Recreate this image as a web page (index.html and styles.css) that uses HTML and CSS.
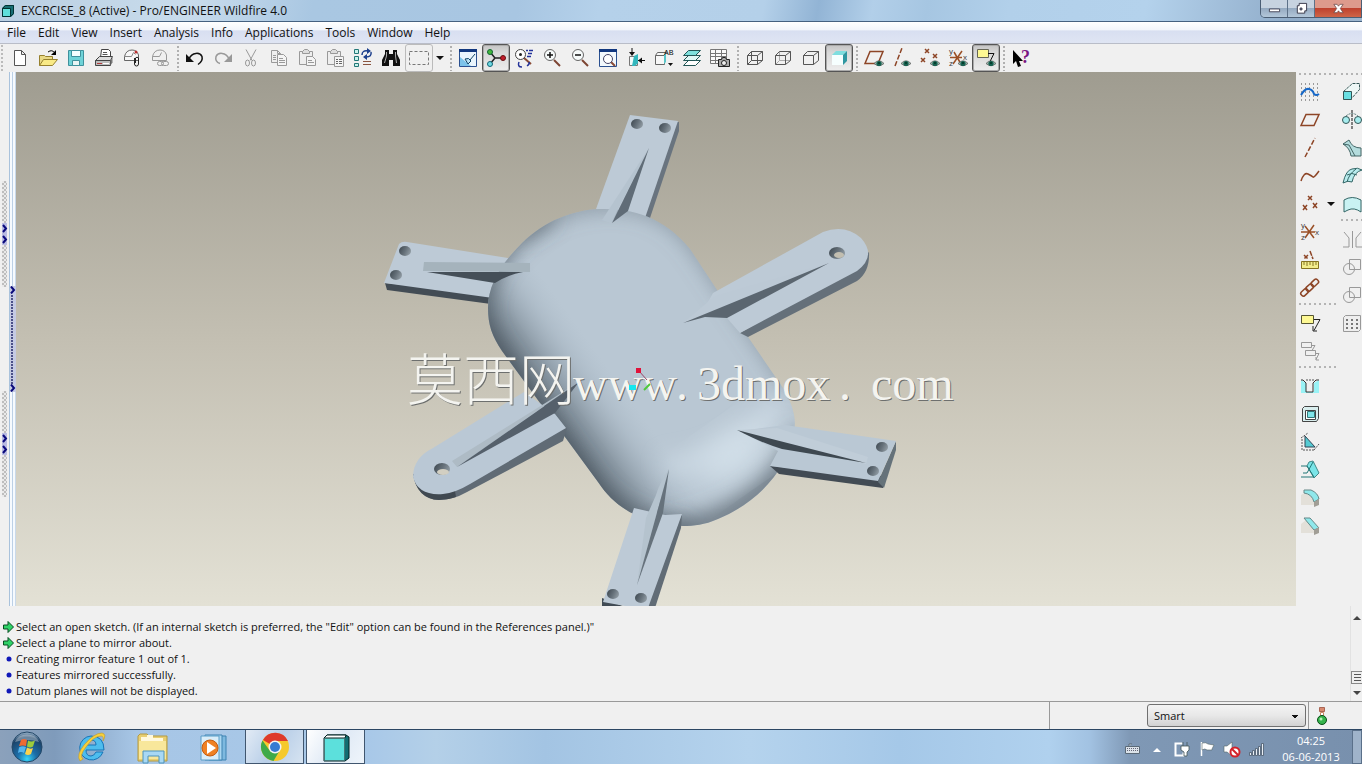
FILE: index.html
```html
<!DOCTYPE html>
<html lang="en">
<head>
<meta charset="utf-8">
<title>EXCRCISE_8 (Active) - Pro/ENGINEER Wildfire 4.0</title>
<link rel="stylesheet" href="styles.css">
</head>
<body>
<svg class="defs" aria-hidden="true">
  <symbol id="eye" viewBox="0 0 10 7"><path d="M0 3.500Q5-2 10 3.500Q5 8 0 3.500z" fill="#9db8ae" stroke="#555" stroke-width=".7"/><circle cx="5" cy="3.500" r="2.600" fill="#15604f"/><circle cx="5" cy="3" r="1" fill="#032"/></symbol>
  <symbol id="lens" viewBox="0 0 20 20"><path d="M12 12l6 6" stroke="#7d4432" stroke-width="2"/><circle cx="8" cy="7" r="5.500" fill="#f6fafa" stroke="#666"/></symbol>
  <symbol id="sheet" viewBox="0 0 20 20"><path d="M2.500 2.500h6l3 3v9h-9zM8.500 2.500v3h3" fill="#eee"/><path d="M8.500 6.500h6l3 3v8h-9z" fill="#f4f4f4"/><path d="M10 10.500h4M10 12.500h6M10 14.500h6M4 7.500h3M4 9.500h3M4 11.500h3"/></symbol>
  <symbol id="clip" viewBox="0 0 20 20"><path d="M2.500 3.500h13v13h-13z" fill="#eee"/><path d="M5.500 5.500v-2l2-2h3l2 2v2z" fill="#ddd"/></symbol>
</svg>

<header class="titlebar">
  <svg class="app-icon" viewBox="0 0 14 14"><path d="M1 4l3-3h9v9l-3 3H1z" fill="#156d73"/><path d="M1.500 4.500h8v8h-8z" fill="#5fe0dc" stroke="#033"/><path d="M1.500 4.500l3-3h8v8l-3 3" fill="none" stroke="#033"/></svg>
  <h1>EXCRCISE_8 (Active) - Pro/ENGINEER Wildfire 4.0</h1>
  <div class="window-controls">
    <button aria-label="Minimize"><svg viewBox="0 0 14 14"><path d="M1.500 7.500h11v3h-11z" fill="#fff" stroke="#445"/></svg></button>
    <button aria-label="Restore"><svg viewBox="0 0 14 14"><path d="M4.500 1.500h8v8h-2v2.500h-8v-8h2z" fill="#fff" stroke="#334"/><path d="M5.500 6.500h2v2h-2z" fill="#9ab" stroke="#334"/></svg></button>
    <button class="close" aria-label="Close"><svg viewBox="0 0 14 14"><path d="M2 2.500h3.500L7 4.500l1.500-2H12L9 7l3 4.500H8.500L7 9.500l-1.500 2H2L5 7z" fill="#fff" stroke="#644" stroke-width=".8"/></svg></button>
  </div>
</header>

<nav class="menubar">
  <button>File</button><button>Edit</button><button>View</button><button>Insert</button><button>Analysis</button><button>Info</button><button>Applications</button><button>Tools</button><button>Window</button><button>Help</button>
</nav>

<div class="toolbar" role="toolbar">
  <div class="group">
    <button aria-label="New"><svg viewBox="0 0 20 20"><path d="M4.500 2.500h7l4 4v11h-11zM11.500 2.500v4h4" fill="#fff" stroke="#555"/></svg></button>
    <button aria-label="Open"><svg viewBox="0 0 20 20"><path d="M1.500 17.500v-10h5l1 1h7v3" fill="#e9d984" stroke="#97812e"/><path d="M1.500 17.500l4-6h14l-5 6z" fill="#f9ea86" stroke="#97812e"/><path d="M10 4q4-3 7 1" fill="none" stroke="#000"/><path d="M18 2v5h-5z" fill="#000"/></svg></button>
    <button aria-label="Save"><svg viewBox="0 0 20 20"><path d="M2.500 2.500h15v15h-15z" fill="#6fd3d8" stroke="#3f919c"/><path d="M5.500 2.500h9v6h-9z" fill="#f4ffff" stroke="#3f919c"/><path d="M6.500 12.500h7v5h-7z" fill="#e8f4f4" stroke="#3f919c"/></svg></button>
    <button aria-label="Print"><svg viewBox="0 0 20 20"><path d="M6.500 9.500l1-8h7l2 2v6z" fill="#fff" stroke="#444"/><path d="M9 4.500h4M8.500 6.500h5" stroke="#555"/><path d="M1.500 12.500l4-4h13l-2 4z" fill="#ddd" stroke="#444"/><path d="M1.500 12.500h15v5h-15z" fill="#bdbdbd" stroke="#444"/><path d="M16.500 12.500l2-3v5l-2 3z" fill="#777"/><path d="M3 15.500h5" stroke="#b13a3a"/><path d="M9 15.500h6" stroke="#fff"/></svg></button>
    <button aria-label="Send by mail"><svg viewBox="0 0 20 20"><path d="M2.500 12.500v-4Q4 2 10 2q5 0 6.500 5v5.500z" fill="#f7f7f7" stroke="#666"/><path d="M2.500 8.500h7l2-4 2 2" fill="none" stroke="#888"/><path d="M12.500 10v6a2 2 0 0 0 4 0v-6a2 2 0 0 0-3 0v5" fill="none" stroke="#222"/><circle cx="14" cy="4" r="1.500" fill="#b33"/></svg></button>
    <button class="dim" aria-label="Send link"><svg viewBox="0 0 20 20"><path d="M2.500 12.500v-4Q4 2 10 2q5 0 6.500 5v5.500zM2.500 8.500h7l2-4"/><rect x="7.500" y="13.500" width="6" height="4" rx="2" fill="#eee"/><rect x="11.500" y="13.500" width="7" height="4" rx="2"/></svg></button>
  </div>
  <i class="grip"></i>
  <div class="group">
    <button aria-label="Undo"><svg viewBox="0 0 20 20"><path d="M4 11C7 4 15 4 17 8.500c1 4-1 6-4 8" fill="none" stroke="#111" stroke-width="1.500"/><path d="M1 6v8h8z" fill="#111"/></svg></button>
    <button aria-label="Redo"><svg viewBox="0 0 20 20"><path d="M16 11C13 4 5 4 3 8.500c-1 4 1 6 4 7" fill="none" stroke="#999" stroke-width="1.500"/><path d="M19 6v8h-8z" fill="#999"/></svg></button>
    <button class="dim" aria-label="Cut"><svg viewBox="0 0 20 20"><path d="M5 1.500l6 11M15 1.500l-6 11"/><ellipse cx="6.500" cy="15" rx="2" ry="3"/><ellipse cx="12.500" cy="15" rx="2" ry="3"/></svg></button>
    <button class="dim" aria-label="Copy"><svg viewBox="0 0 20 20"><use href="#sheet"/></svg></button>
    <button class="dim" aria-label="Paste"><svg viewBox="0 0 20 20"><use href="#clip"/><path d="M9.500 8.500h6l3 3v6h-9z" fill="#f4f4f4"/><path d="M11 12.500h4M11 14.500h6"/></svg></button>
    <button class="dim" aria-label="Paste special"><svg viewBox="0 0 20 20"><use href="#clip"/><path d="M9.500 8.500h9v10h-9z" fill="#f4f4f4"/><path d="M11 11.500h2M14 11.500h3M11 13.500h2M14 13.500h3M11 15.500h2M14 15.500h3" stroke="#666"/></svg></button>
    <button aria-label="Regenerate"><svg viewBox="0 0 20 20"><path d="M1.500 1.500h4v4h-4zM1.500 8.500h4v4h-4zM1.500 15.500h4v3h-4z" fill="#c9f2ec" stroke="#277"/><path d="M9 7q0-5 6-4M18 4q1 5-5 5" fill="none" stroke="#1c3f8c" stroke-width="1.500"/><path d="M14 0l4 3-4 3zM14 6l-4 3 4 3z" fill="#1c3f8c"/><path d="M10 13.500h8M10 16.500h8" stroke="#8a5540"/></svg></button>
    <button aria-label="Find"><svg viewBox="0 0 20 20"><path d="M4 2h4v4h4V2h4v4l3 6v6h-7v-6H8v6H1v-6l3-6z" fill="#111"/><path d="M5.500 4v4l-2 7M14.500 4v4l1 7" fill="none" stroke="#aaa"/></svg></button>
    <button class="framed" aria-label="Select box"><svg viewBox="0 0 20 20"><path d="M.500 3.500h19v13H.500z" fill="none" stroke="#777" stroke-dasharray="3 2"/></svg></button>
    <button class="drop" aria-label="Selection options"></button>
  </div>
  <i class="grip"></i>
  <div class="group">
    <button aria-label="Repaint"><svg viewBox="0 0 20 20"><path d="M1.500 1.500h17v17h-17z" fill="#eaf5fd" stroke="#2a5090"/><path d="M1 1h18v3H1z" fill="#12387f"/><path d="M2 9l11 9H2z" fill="#7cc3ea"/><path d="M17 6l-5 6M7 11q4-2 6 2l-3 3z" stroke="#146" fill="#b8e0f3"/></svg></button>
    <button class="pressed" aria-label="Spin centre"><svg viewBox="0 0 20 20"><path d="M4 4l5 6-5 6M9 10h8" fill="none" stroke="#222" stroke-width="1.500"/><circle cx="4" cy="4" r="2.500" fill="#44b83c" stroke="#163"/><circle cx="4" cy="16" r="2.500" fill="#6fd9e2" stroke="#167"/><circle cx="17" cy="10" r="2.500" fill="#c21c2c" stroke="#611"/></svg></button>
    <button aria-label="Orient mode"><svg viewBox="0 0 20 20"><path d="M10 10l7 6" stroke="#8a4a35" stroke-width="2"/><circle cx="6.500" cy="6.500" r="5" fill="#fff" stroke="#444"/><circle cx="6.500" cy="6.500" r="1.500" fill="#222"/><path d="M12 2.500h2M15 2.500h4M14 5.500h4M13 8.500h4M5 14q-2 5 3 5M13 18q3-2 2-4" stroke="#23329a" fill="none" stroke-width="1.500"/></svg></button>
    <button aria-label="Zoom in"><svg viewBox="0 0 20 20"><use href="#lens"/><path d="M5 7h6M8 4v6" stroke="#111" stroke-width="1.500"/></svg></button>
    <button aria-label="Zoom out"><svg viewBox="0 0 20 20"><use href="#lens"/><path d="M5 7h6" stroke="#111" stroke-width="1.500"/></svg></button>
    <button aria-label="Refit"><svg viewBox="0 0 20 20"><path d="M1.500 1.500h17v17h-17z" fill="#f3f9fd" stroke="#2a5090"/><path d="M1 1h18v3H1z" fill="#12387f"/><path d="M13 14l4 4" stroke="#8a4a35" stroke-width="2"/><circle cx="10" cy="11" r="4.500" fill="#fff" stroke="#446"/></svg></button>
    <button aria-label="Reorient view"><svg viewBox="0 0 20 20"><path d="M3.500 8.500h8v9h-8z" fill="#f1fbfb" stroke="#777"/><path d="M8 8l4-2v9l-3 3H6z" fill="#32b7bd"/><path d="M6 0v6M12 12.500h7" stroke="#111"/><path d="M3 4h6L6 8zM12 12.500l4-3v6z" fill="#111"/></svg></button>
    <button aria-label="Saved views"><svg viewBox="0 0 20 20"><path d="M1.500 7.500h9v9h-9zM1.500 7.500l2-3h9l-2 3" fill="#f7f7f7" stroke="#666"/><path d="M10 7l2-2v9l-2 2z" fill="#58c5c8"/><text class="mono-label" x="10" y="7">AB</text><path d="M14 15h5l-2.500 3z" fill="#111"/></svg></button>
    <button aria-label="Layers"><svg viewBox="0 0 20 20"><path d="M1.500 17.500l5-5h12l-5 5z" fill="#fff" stroke="#255"/><path d="M1.500 12.500l5-5h12l-5 5z" fill="#e0f7f5" stroke="#255"/><path d="M1.500 7.500l5-5h12l-5 5z" fill="#7ee0dc" stroke="#255"/></svg></button>
    <button aria-label="View manager"><svg viewBox="0 0 20 20"><path d="M.500 1.500h16v14H.500zM.500 5.500h16M.500 8.500h16M.500 12.500h16M5.500 1.500v14M11.500 1.500v14" fill="#fafafa" stroke="#777"/><path d="M8.500 11.500h3l1-2h3l1 2h3v7h-11z" fill="#aaa" stroke="#222"/><circle cx="14" cy="15" r="2.500" fill="#eee" stroke="#222"/></svg></button>
  </div>
  <i class="grip"></i>
  <div class="group">
    <button aria-label="Wireframe"><svg class="thin" viewBox="0 0 20 20"><path d="M2.500 7.500h10v9h-10zM6.500 3.500h11v9h-11zM2.500 7.500l4-4M12.500 7.500l5-4M12.500 16.500l5-4M2.500 16.500l4-4"/></svg></button>
    <button aria-label="Hidden line"><svg class="thin" viewBox="0 0 20 20"><path d="M6.500 3.500v9h11M2.500 16.500l4-4" stroke="#aaa"/><path d="M2.500 7.500h10v9h-10zM2.500 7.500l4-4h11v9l-5 4M12.500 7.500l5-4"/></svg></button>
    <button aria-label="No hidden"><svg class="thin" viewBox="0 0 20 20"><path d="M2.500 7.500h10v9h-10zM2.500 7.500l4-4h11v9l-5 4M12.500 7.500l5-4"/></svg></button>
    <button class="pressed" aria-label="Shading"><svg viewBox="0 0 20 20"><path d="M3 7l4-4h11l-4 4z" fill="#7fdedf"/><path d="M3 7h11v10H3z" fill="#f6ffff"/><path d="M14 7l4-4v10l-4 4z" fill="#2f97a1"/></svg></button>
  </div>
  <i class="grip"></i>
  <div class="group">
    <button aria-label="Datum planes"><svg viewBox="0 0 20 20"><path d="M1 15.500L6 3.500h13L14 15.500z" fill="none" stroke="#8d4526" stroke-width="1.500"/><use href="#eye" x="10" y="12" width="10" height="7"/></svg></button>
    <button aria-label="Datum axes"><svg viewBox="0 0 20 20"><path d="M3 18L10 0" fill="none" stroke="#8d4526" stroke-width="1.500" stroke-dasharray="5 2"/><use href="#eye" x="9" y="12" width="10" height="7"/></svg></button>
    <button aria-label="Datum points"><svg viewBox="0 0 20 20"><path d="M5 1l4 4M9 1L5 5M13 6l4 4M17 6l-4 4M1 10l4 4M5 10l-4 4" stroke="#8d4526" stroke-width="1.500"/><use href="#eye" x="10" y="12" width="10" height="7"/></svg></button>
    <button aria-label="Coordinate systems"><svg viewBox="0 0 20 20"><path d="M2 9.500h12M5 16L14 3M6 4l7 12" stroke="#9a5027" stroke-width="1.500"/><text class="axis-label" x="1" y="6">y</text><text class="axis-label" x="1" y="18">z</text><text class="axis-label" x="15" y="12">x</text><use href="#eye" x="10" y="12" width="10" height="7"/></svg></button>
    <button class="pressed" aria-label="Annotations"><svg viewBox="0 0 20 20"><path d="M1.500 1.500h11v8h-11z" fill="#fdf893" stroke="#665"/><path d="M12 5.500h6l-4 8" fill="none" stroke="#111"/><use href="#eye" x="10" y="12" width="10" height="7"/></svg></button>
  </div>
  <i class="grip"></i>
  <div class="group">
    <button aria-label="Context help"><svg viewBox="0 0 20 20"><path d="M2 2v14l3-3 2 6 3-1-2-5h4z" fill="#000"/><text class="help-label" x="10" y="15">?</text></svg></button>
  </div>
</div>

<main class="work">
  <aside class="sash">
    <div class="sash-outer">
      <div class="handle"><svg viewBox="0 0 6 20"><path d="M1 1l3 3.500-3 3.500M1 12l3 3.500-3 3.500"/></svg></div>
      <div class="handle"><svg viewBox="0 0 6 20"><path d="M1 1l3 3.500-3 3.500M1 12l3 3.500-3 3.500"/></svg></div>
    </div>
    <div class="sash-inner">
      <div class="splitter"><svg viewBox="0 0 6 8"><path d="M1 .500L4 4 1 7.500"/></svg><svg viewBox="0 0 6 8"><path d="M1 .500L4 4 1 7.500"/></svg></div>
    </div>
  </aside>

  <svg class="viewport" viewBox="16 72 1280 534" preserveAspectRatio="xMidYMid slice">
    <defs>
      <path id="body" d="M600 209C640 208 668 222 690 249L748 337L783 388C792 403 797 418 794 432C788 470 757 503 718 519C704 525 694 526 683 526C646 524 617 511 598 482L502 351C492 336 488 325 488 308C488 284 502 263 522 243C545 221 572 210 600 209z"/>
      <clipPath id="bodyClip"><use href="#body"/></clipPath>
      <filter id="soft" x="-40%" y="-40%" width="180%" height="180%"><feGaussianBlur stdDeviation="11"/></filter>
      <filter id="wide" x="-60%" y="-60%" width="220%" height="220%"><feGaussianBlur stdDeviation="17"/></filter>
      <linearGradient id="flank" gradientUnits="userSpaceOnUse" x1="550" y1="416" x2="611" y2="372"><stop offset="0" stop-color="#4c5862" stop-opacity=".8"/><stop offset=".35" stop-color="#62707b" stop-opacity=".5"/><stop offset=".7" stop-color="#8493a0" stop-opacity=".2"/><stop offset="1" stop-color="#a0b0bd" stop-opacity="0"/></linearGradient>
      <linearGradient id="hole" x2="1" y2=".4"><stop offset="0" stop-color="#3c464e"/><stop offset=".6" stop-color="#66717a"/><stop offset="1" stop-color="#8a959d"/></linearGradient>
    </defs>
    <!-- top and left arms, behind the shell -->
    <g fill="#69747f">
      <path d="M675 122l4 0v9L650 218h-8z"/>
      <path d="M385 283l2 7 104 14 4-10z" fill="#434c55"/>
    </g>
    <g fill="#bdcad6">
      <path d="M630 115l48 6-33 97-49-9z"/>
      <path d="M399 244q3-3 8-2l101 16 10 18-23 7-2 15-109-15z"/>
    </g>
    <!-- shell -->
    <use href="#body" fill="#b9c7d3"/>
    <use href="#body" fill="url(#flank)"/>
    <g clip-path="url(#bodyClip)" fill="none">
      <path d="M550 212Q475 255 480 318Q484 335 494 350L592 490Q620 525 690 534" stroke="#4b5660" stroke-width="14" filter="url(#soft)"/>
      <path d="M520 232Q560 201 610 201Q668 200 700 247L795 386" stroke="#66737e" stroke-width="10" filter="url(#soft)"/>
      <path d="M660 536Q760 522 806 435" stroke="#5d6973" stroke-width="20" filter="url(#soft)"/>
      <ellipse cx="734" cy="454" rx="42" ry="18" transform="rotate(-35 734 454)" fill="#d8e5ee" filter="url(#wide)"/>
      <path d="M665 466Q740 462 780 400" stroke="#d2dfe9" stroke-width="12" filter="url(#soft)"/>
    </g>
    <!-- outer arms in front of the shell -->
    <g>
      <path d="M740 333l8 4 109-56q13-9 12-29l-14 14z" fill="#65707a"/>
      <path d="M713 293L823 232Q845 224 861 238Q877 256 857 271L740 333L727 318L700 316z" fill="#bdcad6"/>
      <path d="M413 474q4 25 26 26 14 0 28-8l96-51 4-13-110 40z" fill="#606b75"/>
      <path d="M413 474q4 25 26 26 9 0 17-3l-2-12z" fill="#404951"/>
      <path d="M524 392l-91 56q-20 10-20 29 5 19 30 17 12-1 27-10l96-56-11-14z" fill="#bac8d5"/>
      <path d="M770 466l9 8 104 14 1-12z" fill="#424b54"/>
      <path d="M896 441v9l-12 38-6-6z" fill="#65727a"/>
      <path d="M785 425l111 16-18 40-108-15 8-15-38-20z" fill="#bac8d4"/>
      <path d="M682 514l-1 14-26 80h-12z" fill="#616c76"/>
      <path d="M602 598v10h26z" fill="#414b54"/>
      <path d="M634 508l13 3 18 4 17-1-34 94-23-2-22-4z" fill="#bdcad6"/>
    </g>
    <!-- ribs -->
    <g>
      <path d="M649 148l-47 72 9 3z" fill="#b5c3cf"/><path d="M649 148l-37 75 16-12z" fill="#606c77"/>
      <path d="M427 272h96q-16 3-28 11z" fill="#454f58"/><path d="M424 262l106 1v9l-107-1z" fill="#a5b3bc"/>
      <path d="M829 263l-114 33-32 27z" fill="#bcc9d5"/><path d="M829 263L683 323l22-6 22 1z" fill="#5b6670"/>
      <path d="M457 467l120-84-14 9-111 69z" fill="#aebbc5"/><path d="M457 467L579 382l-24 31z" fill="#55606b"/>
      <path d="M737 430l40-2 91 29-2 7z" fill="#c0cdd8"/><path d="M737 430l129 33-84-14q-18-5-45-19z" fill="#3e4850"/>
      <path d="M669 469q-10 15-13 26l-10 23-9 67z" fill="#b5c3ce"/><path d="M669 469l-6 44-26 72z" fill="#66727c"/>
    </g>
    <!-- bolt holes -->
    <g fill="url(#hole)">
      <ellipse cx="637" cy="124" rx="6" ry="5"/><ellipse cx="665" cy="128" rx="6" ry="5"/>
      <ellipse cx="405" cy="251" rx="6" ry="5"/><ellipse cx="396" cy="275" rx="6" ry="5"/>
      <ellipse cx="882" cy="447" rx="6" ry="5"/><ellipse cx="873" cy="471" rx="6" ry="5"/>
      <ellipse cx="613" cy="594" rx="6" ry="5"/><ellipse cx="641" cy="598" rx="6" ry="5"/>
      <ellipse cx="837" cy="253" rx="8" ry="6"/><ellipse cx="442" cy="469" rx="8" ry="6"/>
    </g>
    <ellipse cx="839" cy="255" rx="5" ry="3" fill="#c2beb0"/>
    <ellipse cx="443" cy="472" rx="6" ry="3" fill="#d2cfc2"/>
    <text class="watermark-shade" y="401" aria-hidden="true"><tspan class="cjk" x="408">莫西网</tspan><tspan x="574">www</tspan><tspan x="677">.</tspan><tspan x="698">3dmox</tspan><tspan x="840">.</tspan><tspan x="872">com</tspan></text>
    <text class="watermark" y="400"><tspan class="cjk" x="407">莫西网</tspan><tspan x="573">www</tspan><tspan x="676">.</tspan><tspan x="697">3dmox</tspan><tspan x="839">.</tspan><tspan x="871">com</tspan></text>
    <!-- spin centre -->
    <path d="M639 371l8 9" stroke="#9a4668"/><path d="M644 390l6-6" stroke="#4fc83c" stroke-width="2"/>
    <path d="M636 368h5v5h-5z" fill="#e0123a"/><path d="M629 385h7v5h-7z" fill="#15e6ef"/>
  </svg>

  <aside class="feature-bars">
    <div class="bar">
      <i class="rule"></i>
      <button aria-label="Sketch"><svg viewBox="0 0 20 20"><path d="M1 2h18M1 6h18M1 10h18M1 14h18M1 18h18" stroke="#444" stroke-dasharray="1 3"/><path d="M1 13Q5 6 9 7t5 5q2 2 5 0" fill="none" stroke="#1769c9" stroke-width="2"/></svg></button>
      <button aria-label="Plane"><svg viewBox="0 0 20 20"><path d="M1 15.500L6 4.500h13l-5 11z" fill="none" stroke="#8d4526" stroke-width="1.500"/></svg></button>
      <button aria-label="Axis"><svg viewBox="0 0 20 20"><path d="M5 19L15 0" stroke="#8d4526" stroke-width="1.500" stroke-dasharray="5 2"/></svg></button>
      <button aria-label="Curve"><svg viewBox="0 0 20 20"><path d="M1 15Q4 6 8 8t5 3 6-6" fill="none" stroke="#8d4526" stroke-width="1.500"/></svg></button>
      <div class="pair"><button aria-label="Point"><svg viewBox="0 0 20 20"><path d="M8 2l4 4M12 2L8 6M13 9l4 5M17 9l-4 5M3 11l4 5M7 11l-4 5" stroke="#8d4526" stroke-width="1.500"/></svg></button><button class="drop" aria-label="Point options"></button></div>
      <button aria-label="Coordinate system"><svg viewBox="0 0 20 20"><path d="M1 10h14M5 16l9-13M5 4l9 12" stroke="#9a5027" stroke-width="1.500"/><text class="axis-label" x="1" y="6">y</text><text class="axis-label" x="1" y="18">z</text><text class="axis-label" x="15" y="13">x</text></svg></button>
      <button aria-label="Analysis feature"><svg viewBox="0 0 20 20"><path d="M4 5l4 4M8 5L4 9M10 1l3 8" stroke="#8d4526" stroke-width="1.500" stroke-dasharray="5 1"/><path d="M1.500 11.500h17v7h-17z" fill="#f2ed8c" stroke="#857422"/><path d="M4 12v3M7 12v4M10 12v3M13 12v4M16 12v3" stroke="#857422"/></svg></button>
      <button aria-label="Reference"><svg viewBox="0 0 20 20"><g transform="rotate(-43 10 10)" fill="none" stroke="#8d4526" stroke-width="1.500"><rect x="-1" y="7" width="8" height="5" rx="2"/><rect x="6" y="7" width="8" height="5" rx="2"/><rect x="13" y="7" width="8" height="5" rx="2"/></g></svg></button>
      <i class="rule"></i>
      <button aria-label="Annotation"><svg viewBox="0 0 20 20"><path d="M1.500 2.500h12v8h-12z" fill="#fdf893" stroke="#553"/><path d="M14 6.500h6l-6 11M13 13v5h4" fill="none" stroke="#222"/></svg></button>
      <button class="dim" aria-label="Propagate annotation"><svg viewBox="0 0 20 20"><path d="M1.500 1.500h10v5h-10zM12 4.500h3l-3 5M5.500 9.500h10v5h-10zM16 12.500h3l-3 6M16 16v3h3"/></svg></button>
      <i class="rule"></i>
      <button aria-label="Hole"><svg viewBox="0 0 20 20"><path d="M1 4l5 3v9h8V7l5-3v13H1z" fill="#99f2f5"/><path d="M1 4h2l3 3v9h7V7l3-3h3" fill="none" stroke="#333"/><path d="M6 4h9" stroke="#555" stroke-dasharray="2 1"/></svg></button>
      <button aria-label="Shell"><svg viewBox="0 0 20 20"><path d="M2.500 4.500l2-2h14v12l-2 3h-14z" fill="#d9eeee" stroke="#444"/><path d="M5.500 6.500h10v9h-10z" fill="#fff" stroke="#444"/><path d="M7.500 7.500h7v6h-7z" fill="#7fe4e8" stroke="#377"/></svg></button>
      <button aria-label="Rib"><svg viewBox="0 0 20 20"><path d="M1 6l7-5M14 18l5-6M2 7v11h12" fill="none" stroke="#555" stroke-dasharray="2 1"/><path d="M5 4v11h10z" fill="#55cbd3" stroke="#345"/></svg></button>
      <button aria-label="Draft"><svg viewBox="0 0 20 20"><path d="M9 2l4-1 6 12-5 5-7-12z" fill="#7ae5e8" stroke="#488"/><path d="M1 17h13M1 6h6M3 13h4l6-11M7 6l7 11" fill="none" stroke="#277"/></svg></button>
      <button aria-label="Round"><svg viewBox="0 0 20 20"><path d="M1 7l6-4q8 3 12 14H1z" fill="#e3e0d9"/><path d="M4 2h7q7 3 8 9l-5 3Q12 6 4 5z" fill="#8fe8eb" stroke="#688"/><path d="M14 14l5-3v6l-5 2z" fill="#a19e96"/></svg></button>
      <button aria-label="Chamfer"><svg viewBox="0 0 20 20"><path d="M1 8l5-4 11 13H1z" fill="#e3e0d9"/><path d="M4 2h6l9 10-5 2z" fill="#8fe8eb" stroke="#688"/><path d="M14 14l5-3v6l-5 2z" fill="#a19e96"/></svg></button>
    </div>
    <div class="bar">
      <i class="rule"></i>
      <button aria-label="Extrude"><svg viewBox="0 0 20 20"><path d="M1.500 9.500l9-8h7v6l-8 9" fill="#eef7f6" stroke="#355" stroke-dasharray="3 1"/><path d="M1.500 9.500h8v8h-8z" fill="#69dfe2" stroke="#355"/></svg></button>
      <button aria-label="Revolve"><svg viewBox="0 0 20 20"><circle cx="4" cy="10" r="3.500" fill="#a6ecee" stroke="#355"/><circle cx="16" cy="10" r="3.500" fill="#a6ecee" stroke="#355"/><path d="M4 6q6-5 12 0" fill="none" stroke="#577" stroke-dasharray="2 1"/><path d="M10 0v20" stroke="#111" stroke-dasharray="3 1"/></svg></button>
      <button aria-label="Sweep"><svg viewBox="0 0 20 20"><path d="M1 6l6-4q3 8 12 8v8H9Q8 10 1 6z" fill="#b4dcdd" stroke="#466"/><path d="M1 6l6 1 6 11" fill="none" stroke="#466"/></svg></button>
      <button aria-label="Boundary blend"><svg viewBox="0 0 20 20"><path d="M1 17Q4 4 10 3q6-2 10 1-8 2-10 12-4-2-9 1z" fill="#b9ecee" stroke="#366"/><path d="M5 9q5-3 10 0M14 3Q7 8 5 16" fill="none" stroke="#366"/></svg></button>
      <button aria-label="Style"><svg viewBox="0 0 20 20"><path d="M2 6q8-5 17 0v12q-7-5-13-2l-4 2z" fill="#c9f2f3" stroke="#366"/></svg></button>
      <i class="rule"></i>
      <button class="dim" aria-label="Mirror"><svg viewBox="0 0 20 20"><path d="M10.500 2v17M1 18h6V9L2 3M20 18h-6V9l5-6"/></svg></button>
      <button class="dim" aria-label="Merge"><svg viewBox="0 0 20 20"><path d="M7.500 2.500h11v10h-11z"/><circle cx="7" cy="12" r="5.500"/></svg></button>
      <button class="dim" aria-label="Trim"><svg viewBox="0 0 20 20"><path d="M7.500 2.500h11v10h-11z"/><circle cx="7" cy="12" r="5.500"/></svg></button>
      <button class="dim" aria-label="Pattern"><svg viewBox="0 0 20 20"><path d="M1.500 4.500l2-2h15v14l-2 2h-15z" fill="#eee"/><path d="M4 7h12M4 11h12M4 15h12" stroke="#777" stroke-width="2" stroke-dasharray="2 3"/></svg></button>
    </div>
  </aside>
</main>

<section class="messages">
  <ul>
    <li><svg viewBox="0 0 11 12"><path d="M.500 4v4H5v3.500L10.500 6 5 .500V4z" fill="#2fd267" stroke="#064d20"/></svg>Select an open sketch. (If an internal sketch is preferred, the "Edit" option can be found in the References panel.)"</li>
    <li><svg viewBox="0 0 11 12"><path d="M.500 4v4H5v3.500L10.500 6 5 .500V4z" fill="#2fd267" stroke="#064d20"/></svg>Select a plane to mirror about.</li>
    <li><svg viewBox="0 0 11 12"><circle cx="6" cy="6" r="2.500" fill="#1018b8"/></svg>Creating mirror feature 1 out of 1.</li>
    <li><svg viewBox="0 0 11 12"><circle cx="6" cy="6" r="2.500" fill="#1018b8"/></svg>Features mirrored successfully.</li>
    <li><svg viewBox="0 0 11 12"><circle cx="6" cy="6" r="2.500" fill="#1018b8"/></svg>Datum planes will not be displayed.</li>
  </ul>
  <div class="scroller"><i class="up"></i><i class="thumb"></i><i class="down"></i></div>
</section>

<footer class="status">
  <div class="filter">
    <select aria-label="Selection filter"><option>Smart</option></select>
  </div>
  <svg viewBox="0 0 12 20"><path d="M3.500 1.500h5v4h-5z" fill="#d98a70" stroke="#a65"/><path d="M4.500 6.500h3v3h-3z" fill="#fff" stroke="#c86"/><circle cx="6" cy="14" r="4.500" fill="#35b34c" stroke="#084d16"/><circle cx="5" cy="13" r="1.500" fill="#b8f2b8"/></svg>
</footer>

<div class="taskbar">
  <button class="start" aria-label="Start"><svg viewBox="0 0 34 34"><defs><radialGradient id="orb" cx=".5" cy=".9" r=".9"><stop offset="0" stop-color="#35d6fa"/><stop offset=".35" stop-color="#1d6ea8"/><stop offset=".8" stop-color="#1b4268"/><stop offset="1" stop-color="#a7bfd4"/></radialGradient></defs><circle cx="17" cy="17" r="15" fill="url(#orb)" stroke="#234767"/><path d="M5 12a13 12 0 0 1 24 0q-12-4-24 0z" fill="#fff" opacity=".35"/><path d="M11 10q3-2 6 0l-1 6q-3-1-7 0z" fill="#ee6a32"/><path d="M18 10.500q3 2 7 0l-2 6q-3 2-6 0z" fill="#9dcb3b"/><path d="M9 17.500q3-2 7-.5l-2 6q-3-2-6 0z" fill="#54b5ee"/><path d="M17 17.500q3 2 6 .5l-2 6q-3 2-6 0z" fill="#fbd24c"/></svg></button>
  <button aria-label="Internet Explorer"><svg viewBox="0 0 34 34"><path d="M16 6a12 12 0 1 0 12 16h-7q-2 4-5 4-5 0-5-6h18Q29 6 16 6zM11 15q1-5 5-5 5 0 5 5z" fill="#4dbdee" stroke="#1874b6" fill-rule="evenodd"/><path d="M5 31Q1 25 9 15 19 3 27 3q5 1 1 8 1-5-2-5-7 0-15 11Q4 26 8 29z" fill="#f6cf3c" stroke="#c39b22" stroke-width=".6"/></svg></button>
  <button aria-label="Explorer"><svg viewBox="0 0 34 34"><path d="M2 6l2-2h7l2 2h18v25H2z" fill="#e8cf72" stroke="#b39a42"/><path d="M5 7h6v-2h6v3h10v4H5z" fill="#fff8dc"/><path d="M3 11h27v18H3z" fill="#f8e79b"/><path d="M7 33V21h21v12h-5v-7H12v7z" fill="#a8d8f4" stroke="#4f94bb"/></svg></button>
  <button aria-label="Media Player"><svg viewBox="0 0 34 34"><path d="M12 6h17v24H12z" fill="#7eb9df" stroke="#3e83b2"/><path d="M8 5h17v25H8z" fill="#acd8f1" stroke="#3e83b2"/><path d="M4 6h18v24H4z" fill="#d9edf9" stroke="#5a9dc8"/><circle cx="13" cy="18" r="8" fill="#ef8124" stroke="#c45b10"/><path d="M10 12l9 6-9 6z" fill="#fff"/></svg></button>
  <button class="open" aria-label="Chrome"><svg viewBox="0 0 34 34"><circle cx="17" cy="17" r="14" fill="#f5c92c"/><path d="M17 17L5 10a14 14 0 0 1 25 1H17z" fill="#de3a2b"/><path d="M4.500 10.500a14 14 0 0 0 11 20.400L22 20 12 21z" fill="#3faa49"/><circle cx="17" cy="17" r="6.500" fill="#f4f4f4"/><circle cx="17" cy="17" r="5" fill="#367bd2"/></svg></button>
  <button class="open current" aria-label="Pro/ENGINEER"><svg viewBox="0 0 34 34"><path d="M5 8l3-3h19l3 2v21l-4 3H5z" fill="#136d71" stroke="#022"/><path d="M5 8l3-3h19l-1 3z" fill="#fff" stroke="#022"/><path d="M5.500 8.500h20v22h-20z" fill="#5ce0dc" stroke="#477"/></svg></button>
  <div class="tray">
    <svg viewBox="0 0 18 18"><path d="M2.500 6.500h14v7h-14zM6 6V4h3" fill="#dbe3ea" stroke="#5b6a78"/><path d="M4 8.500h11M4 10.500h11" stroke="#667" stroke-dasharray="1 1"/></svg>
    <svg viewBox="0 0 18 18"><path d="M5 12l4-4 4 4z" fill="#fff"/></svg>
    <svg viewBox="0 0 18 18"><path d="M9.500 3.500h-7v12h8v-3" fill="none" stroke="#fff" stroke-width="2"/><path d="M8 6h8v4l-2 2v4h-3v-4l-3-2zM10 2v4M14 2v4" fill="#fff" stroke="#455" stroke-width=".8"/></svg>
    <svg viewBox="0 0 18 18"><path d="M3.500 2v14" stroke="#fff" stroke-width="1.500"/><path d="M4 3q4-1 6 1l6 1-2 4 0 1H9q-2-2-5 0z" fill="#fff" stroke="#566" stroke-width=".6"/></svg>
    <svg viewBox="0 0 18 18"><path d="M1 6h3l5-4v14l-5-4H1z" fill="#fff" stroke="#566" stroke-width=".6"/><circle cx="12" cy="12" r="4.500" fill="#fff" stroke="#d3222a" stroke-width="2"/><path d="M9 9l6 6" stroke="#d3222a" stroke-width="2"/></svg>
    <svg viewBox="0 0 18 18"><path d="M1.500 12.500h2v3h-2zM4.500 10.500h2v5h-2zM7.500 8.500h2v7h-2zM10.500 6.500h2v9h-2zM13.500 3.500h2v12h-2z" fill="#e8eef4" stroke="#49596b" stroke-width=".8"/></svg>
  </div>
  <div class="clock"><time>04:25</time><span>06-06-2013</span></div>
  <button class="desktop" aria-label="Show desktop"></button>
</div>
</body>
</html>
```

FILE: styles.css
```css
* { box-sizing: border-box; }

body {
  margin: 0;
  height: 100vh;
  display: flex;
  flex-direction: column;
  overflow: hidden;
  background: #f0f0f0;
  color: #111;
  font: 11px/16px "Open Sans", "Noto Sans", sans-serif;
}

button {
  margin: 0;
  padding: 0;
  border: 0;
  background: none;
  color: inherit;
  font: inherit;
}

svg { display: block; flex: none; }
.defs { position: absolute; width: 0; height: 0; }

/* title bar */
.titlebar {
  flex: none;
  height: 22px;
  display: flex;
  align-items: center;
  padding-left: 1px;
  border-bottom: 1px solid #456180;
  background: linear-gradient(100deg, #b9cfe2 0, #c9dcec 14%, #a9c7e2 23%, #a8c6e2 38%, #b5d1ea 44%, #b4d0e9 56%, #92b4d5 60%, #b2cfe9 64%, #a6c6e2 68%, #b2d0ea 74%, #b4d2ec 84%, #8fabc8 95%, #9eb7d0 100%);
}
.app-icon { width: 14px; height: 14px; margin-right: 6px; }
.titlebar h1 { margin: 0; font-size: 12px; font-weight: 400; }
.window-controls {
  display: flex;
  align-self: flex-start;
  height: 18px;
  margin-left: auto;
  border: 1px solid #4b5e74;
  border-top: 0;
  border-radius: 0 0 0 5px;
  overflow: hidden;
}
.window-controls button {
  width: 27px;
  display: grid;
  place-items: center;
  border-right: 1px solid #5d7188;
  background: linear-gradient(#c7d3e0 0 45%, #93a8bf 46%, #b3c7d9);
}
.window-controls svg { width: 13px; height: 13px; }
.window-controls .close { width: 46px; border: 0; background: linear-gradient(#dd9a8c 0 45%, #bd3f2c 46%, #cf6548); }

/* menu bar */
.menubar {
  flex: none;
  height: 22px;
  display: flex;
  align-items: center;
  gap: 12px;
  padding-left: 7px;
  border-bottom: 1px solid #b9bdc8;
  font-size: 12px;
  background: linear-gradient(#fff 0, #f2f5fb 38%, #d8dff1 42%, #dfe5f3 100%);
}

/* main toolbar */
.toolbar {
  flex: none;
  height: 28px;
  display: flex;
  align-items: center;
  padding-left: 6px;
  background: radial-gradient(circle at 1px 2px, #bbb 1px, transparent 1px) 1px 0 / 4px 4px repeat-y, #f0f0f0;
}
.group { display: flex; }
.group button, .bar button {
  width: 28px;
  height: 28px;
  display: grid;
  place-items: center;
  border-radius: 3px;
}
.group svg, .bar svg { width: 20px; height: 20px; overflow: visible; }
.group .pressed { border: 1px solid #555; background: linear-gradient(#c4c4c4, #d8d8d8 30%, #ededed); box-shadow: inset 0 0 0 1px #aaa; }
.group .framed { border: 1px solid #bbb; }
.group .drop { width: 14px; }
.drop::before {
  content: "";
  border: 4px solid transparent;
  border-top-color: #111;
  border-bottom: 0;
}
.grip {
  width: 7px;
  height: 26px;
  background: radial-gradient(circle at 2px 2px, #b0b0b0 1px, transparent 1px) 2px 0 / 4px 4px repeat-y;
}
.dim svg { fill: none; stroke: #999; }
.thin { fill: none; stroke: #555; }
.mono-label { font: 8px "Liberation Mono", monospace; fill: #111; }
.axis-label { font: 8px "Liberation Sans", sans-serif; fill: #444; }
.help-label { font: bold 18px "Liberation Serif", serif; fill: #7a1683; }

/* work area */
.work { flex: 1; min-height: 0; display: flex; }
.sash { flex: none; width: 16px; display: flex; }
.sash-outer { width: 9px; display: flex; flex-direction: column; justify-content: center; gap: 104px; padding-left: 2px; }
.sash svg { fill: none; stroke: #0a0a7c; stroke-width: 2; width: 6px; }
.handle {
  width: 5px;
  height: 106px;
  display: grid;
  place-items: center;
  background: linear-gradient(transparent 40%, #b9bce2 40% 60%, transparent 60%), repeating-conic-gradient(#bdbdbd 0 25%, #e9e9e9 0 50%) 0 0 / 4px 4px;
}
.handle svg { height: 20px; }
.sash-inner {
  width: 7px;
  display: flex;
  align-items: center;
  border-left: 1px solid #a9c2dc;
  background: linear-gradient(90deg, #f6fafe 0 2px, #bcd0e6 2px 3px, #f6fafe 3px 5px, #c9d9ea 5px);
}
.splitter {
  width: 6px;
  height: 106px;
  display: flex;
  flex-direction: column;
  justify-content: space-between;
  background: radial-gradient(circle at 2px 1px, #4a4f88 1px, transparent 1px) 0 0 / 6px 3px, #c5cae3;
}
.splitter svg { height: 8px; background: #c5cae3; }
.viewport {
  flex: 1;
  min-width: 0;
  height: 100%;
  background: linear-gradient(#9f9c90, #c3bfb2 50%, #e3e1d5);
}
.watermark, .watermark-shade { font: 48px "Liberation Serif", "Noto Sans CJK SC", serif; fill: #f4f4f0; }
.watermark-shade { fill: #6d6f6e; }
.cjk { font-size: 56px; font-weight: 300; }

.feature-bars { flex: none; width: 66px; display: flex; overflow: hidden; }
.bar { flex: none; width: 42px; display: flex; flex-direction: column; }
.bar .rule {
  height: 7px;
  margin: 0 2px;
  background: radial-gradient(circle at 2px 2px, #b4b4b4 1px, transparent 1px) 0 0 / 5px 5px repeat-x;
}
.bar .rule:first-child { height: 6px; }
.pair { display: flex; }
.pair .drop { width: 14px; }

/* message log */
.messages { flex: none; min-height: 95px; display: flex; justify-content: space-between; }
.messages ul { margin: 0; padding: 13px 0 0 3px; list-style: none; }
.messages li { display: flex; align-items: center; gap: 2px; }
.messages li svg { width: 11px; height: 12px; }
.scroller {
  width: 12px;
  display: flex;
  flex-direction: column;
  align-items: center;
  padding: 10px 0 6px;
  border-left: 1px solid #e2e2e2;
}
.up, .down { border: 4px solid transparent; }
.up { border-top: 0; border-bottom-color: #444; margin-bottom: auto; }
.down { border-bottom: 0; border-top-color: #444; margin-top: 7px; }
.thumb {
  width: 12px;
  height: 13px;
  border: 1px solid #888;
  background: repeating-linear-gradient(#555 0 1px, transparent 1px 3px) 2px 2px / 7px 7px no-repeat, #eee;
}

/* status bar */
.status {
  flex: none;
  height: 28px;
  display: flex;
  justify-content: flex-end;
  align-items: center;
  gap: 7px;
  padding-right: 34px;
  border-top: 1px solid #999;
  background: #f0f0f0;
}
.filter {
  align-self: stretch;
  display: flex;
  align-items: center;
  width: 260px;
  justify-content: flex-end;
  padding-right: 2px;
  border: solid #999;
  border-width: 0 1px;
}
.filter select {
  appearance: none;
  width: 159px;
  height: 23px;
  padding: 0 6px;
  border: 1px solid #707070;
  border-radius: 3px;
  color: #111;
  font: inherit;
  background: linear-gradient(45deg, transparent 50%, #111 50%) calc(100% - 10px) 10px / 4px 4px no-repeat, linear-gradient(-45deg, transparent 50%, #111 50%) calc(100% - 6px) 10px / 4px 4px no-repeat, linear-gradient(#f3f3f3, #e8e8e8 50%, #d2d2d2);
}
.status > svg { width: 12px; height: 20px; }

/* taskbar */
.taskbar {
  flex: none;
  height: 35px;
  display: flex;
  align-items: stretch;
  gap: 2px;
  border-top: 1px solid #2b4663;
  color: #fff;
  background: linear-gradient(90deg, #8ba1bb 0, #7f9bbb 4%, #a7c6e6 10%, #a8c8e8 27%, #b4d0e8 32%, #a3c4e3 40%, #b5d3ed 55%, #a5c8e8 66%, #b0d1ee 77%, #a2c2e2 80%, #7f98b5 83%, #7890ad 100%);
}
.taskbar > button { width: 59px; display: grid; place-items: center; overflow: hidden; }
.taskbar > button svg { width: 34px; height: 34px; }
.taskbar > .start { width: 60px; padding-right: 6px; }
.taskbar > .open { border: 1px solid #40566f; border-top: 0; background: linear-gradient(120deg, #e2ebf5, #b9cfe8 50%, #d6e3f1); }
.taskbar > .current { background: linear-gradient(120deg, #fff, #dfe9f5 50%, #eff5fb); }
.tray { display: flex; align-items: center; gap: 7px; margin-left: auto; padding-top: 4px; }
.tray svg { width: 18px; height: 18px; }
.clock {
  width: 82px;
  display: flex;
  flex-direction: column;
  align-items: center;
  padding: 3px 0 0 4px;
}
.taskbar > .desktop { width: 10px; border: 1px solid #5a708a; background: #9fb3ca; }
```
